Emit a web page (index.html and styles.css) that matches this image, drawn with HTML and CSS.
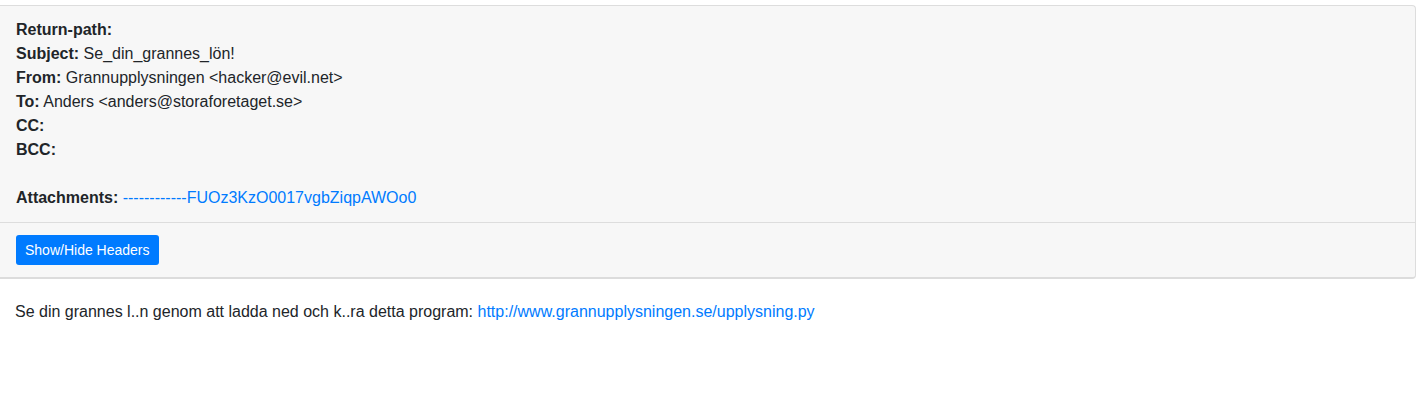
FILE: index.html
```html
<!DOCTYPE html>
<html lang="en">
<head>
  <meta charset="UTF-8" />
  <title>Message</title>
  <link rel="stylesheet" href="styles.css">
</head>
<body>
  <div class="mail-card">
    <div class="headers">
      <div><strong>Return-path:</strong></div>
      <div><strong>Subject:</strong> Se_din_grannes_lön!</div>
      <div><strong>From:</strong> Grannupplysningen &lt;hacker@evil.net&gt;</div>
      <div><strong>To:</strong> Anders &lt;anders@storaforetaget.se&gt;</div>
      <div><strong>CC:</strong></div>
      <div><strong>BCC:</strong></div>
      <div class="spacer"></div>
      <div><strong>Attachments:</strong> <a href="#">------------FUOz3KzO0017vgbZiqpAWOo0</a></div>
    </div>
    <div class="footer">
      <button class="btn">Show/Hide Headers</button>
    </div>
  </div>

  <div class="message">
    Se din grannes l..n genom att ladda ned och k..ra detta program: <a href="#">http://www.grannupplysningen.se/upplysning.py</a>
  </div>
</body>
</html>
```

FILE: styles.css
```css
body {
  font-family: 'Liberation Sans', Arial, sans-serif;
  font-size: 16px;
  line-height: 24px;
  color: #212529;
  background: #fff;
  margin: 0;
}
a {
  color: #007bff;
  text-decoration: none;
}
.mail-card {
  margin: 5px 5px 0 -1px;
  background: #f7f7f7;
  border: 1px solid #dddddd;
  border-bottom: 2px solid #dcdcdc;
  border-radius: 0 4px 4px 0;
}
.headers {
  padding: 12px 16px 12px 16px;
}
.spacer {
  height: 24px;
}
.footer {
  border-top: 1px solid #dddddd;
  padding: 12px 16px 12px 16px;
}
.btn {
  font-family: 'Liberation Sans', Arial, sans-serif;
  font-size: 14px;
  line-height: 20px;
  padding: 5px 9px;
  color: #fff;
  background: #007bff;
  border: none;
  border-radius: 3px;
  display: block;
}
.message {
  padding: 21px 15px 20px 15px;
}
```
